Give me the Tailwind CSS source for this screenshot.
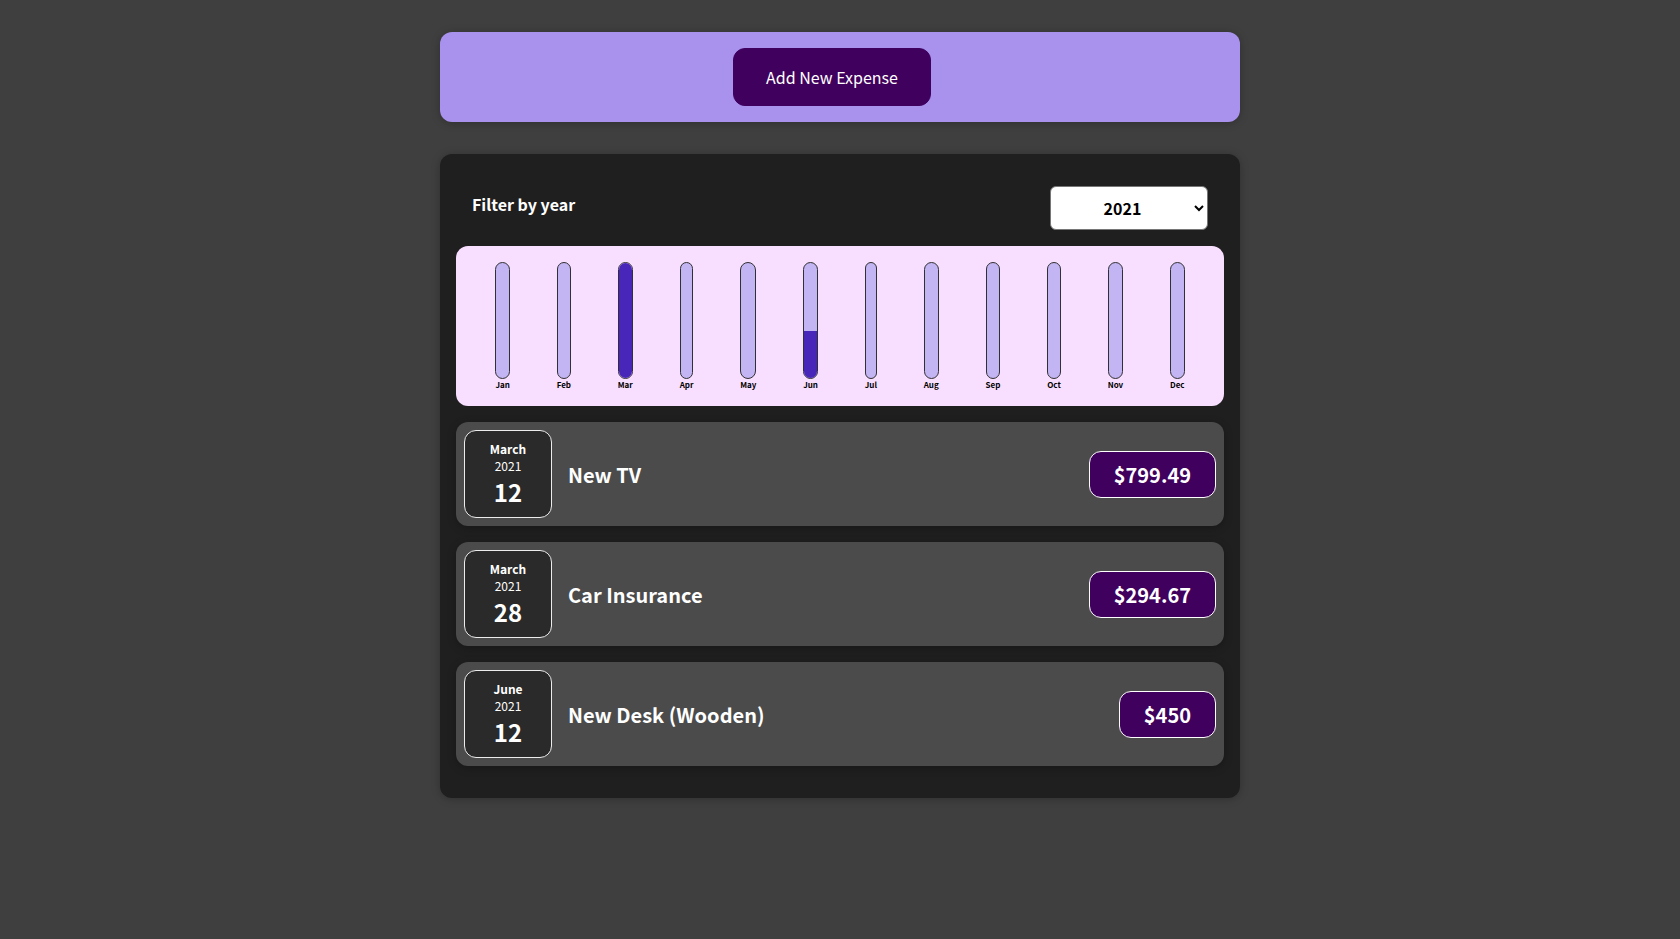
<!DOCTYPE html>
<html lang="en">
<head>
<meta charset="utf-8">
<meta name="viewport" content="width=device-width, initial-scale=1">
<title>Expenses</title>
<script src="https://cdn.jsdelivr.net/npm/@tailwindcss/browser@4"></script>
</head>
<body class="min-h-screen bg-[#3f3f3f] p-8 font-['Noto_Sans_CJK_JP',sans-serif] text-white">
<main class="mx-auto flex max-w-[800px] flex-col gap-8">
  <section class="rounded-xl bg-[#a892ee] p-4 pr-8 text-center shadow-[0_1px_8px_rgba(0,0,0,0.25)]">
    <button type="button" class="block mx-auto cursor-pointer rounded-xl border border-[#40005d] bg-[#40005d] px-8 py-4 text-[16px] leading-6">Add New Expense</button>
  </section>

  <section class="rounded-xl bg-[#1f1f1f] p-4 pb-8 shadow-[0_1px_8px_rgba(0,0,0,0.25)]">
    <div class="flex items-start justify-between p-4">
      <label for="year" class="pt-1 text-[16px] leading-7 font-bold">Filter by year</label>
      <select id="year" class="h-11 w-[158px] rounded-md border border-[#767676] bg-white pr-px text-center text-[16px] font-bold text-black">
        <option>2022</option>
        <option selected>2021</option>
        <option>2020</option>
        <option>2019</option>
      </select>
    </div>

    <div id="chart" class="flex h-40 justify-around rounded-xl bg-[#f8dfff] p-4 text-center"></div>

    <ul class="mt-4 flex flex-col gap-4">
      <li class="flex items-center gap-4 rounded-xl bg-[#4b4b4b] p-2 shadow-[0_2px_8px_rgba(0,0,0,0.25)]">
        <time datetime="2021-03-12" class="flex size-[88px] flex-col items-center justify-center rounded-xl border border-[#ececec] bg-[#2a2a2a] pt-0.5">
          <span class="text-[12px] leading-4 font-bold">March</span>
          <span class="text-[12px] leading-[17px]">2021</span>
          <span class="text-[24px] leading-[35px] font-bold">12</span>
        </time>
        <h2 class="flex-1 text-[20px] leading-[29px] font-bold">New TV</h2>
        <p class="rounded-xl border border-white bg-[#40005d] px-6 py-2 text-[20px] leading-[29px] font-bold">$799.49</p>
      </li>
      <li class="flex items-center gap-4 rounded-xl bg-[#4b4b4b] p-2 shadow-[0_2px_8px_rgba(0,0,0,0.25)]">
        <time datetime="2021-03-28" class="flex size-[88px] flex-col items-center justify-center rounded-xl border border-[#ececec] bg-[#2a2a2a] pt-0.5">
          <span class="text-[12px] leading-4 font-bold">March</span>
          <span class="text-[12px] leading-[17px]">2021</span>
          <span class="text-[24px] leading-[35px] font-bold">28</span>
        </time>
        <h2 class="flex-1 text-[20px] leading-[29px] font-bold">Car Insurance</h2>
        <p class="rounded-xl border border-white bg-[#40005d] px-6 py-2 text-[20px] leading-[29px] font-bold">$294.67</p>
      </li>
      <li class="flex items-center gap-4 rounded-xl bg-[#4b4b4b] p-2 shadow-[0_2px_8px_rgba(0,0,0,0.25)]">
        <time datetime="2021-06-12" class="flex size-[88px] flex-col items-center justify-center rounded-xl border border-[#ececec] bg-[#2a2a2a] pt-0.5">
          <span class="text-[12px] leading-4 font-bold">June</span>
          <span class="text-[12px] leading-[17px]">2021</span>
          <span class="text-[24px] leading-[35px] font-bold">12</span>
        </time>
        <h2 class="flex-1 text-[20px] leading-[29px] font-bold">New Desk (Wooden)</h2>
        <p class="rounded-xl border border-white bg-[#40005d] px-6 py-2 text-[20px] leading-[29px] font-bold">$450</p>
      </li>
    </ul>
  </section>
</main>
<script>
  // Share of the highest month's total, in percent
  const months = [['Jan',0],['Feb',0],['Mar',100],['Apr',0],['May',0],['Jun',41],['Jul',0],['Aug',0],['Sep',0],['Oct',0],['Nov',0],['Dec',0]];
  document.getElementById('chart').innerHTML = months.map(([name, share]) => `
    <div class="flex flex-col">
      <div class="flex flex-1 flex-col justify-end overflow-hidden rounded-xl border border-[#313131] bg-[#c3b4f3]">
        <div class="bg-[#4826b9]" style="height:${share}%"></div>
      </div>
      <div class="text-[8px] leading-[11px] font-bold text-black">${name}</div>
    </div>`).join('');
</script>
</body>
</html>
